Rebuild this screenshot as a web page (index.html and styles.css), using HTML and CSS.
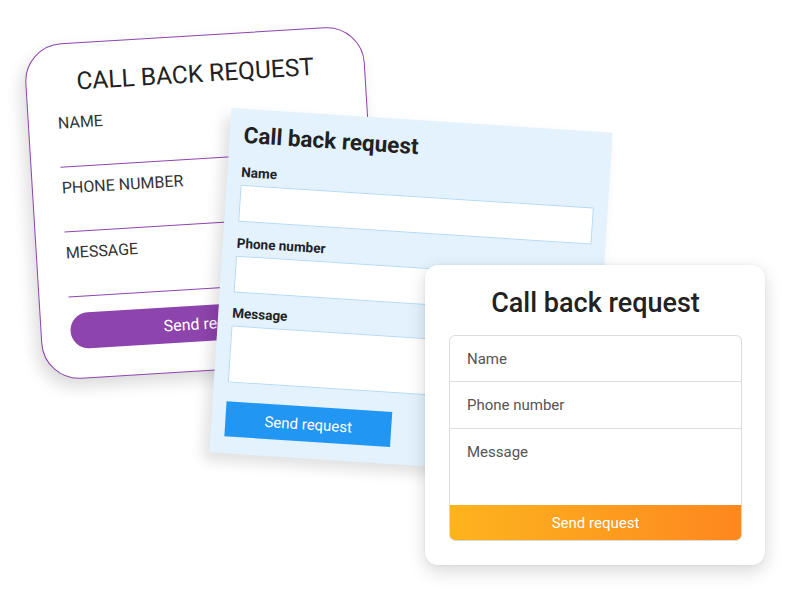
FILE: index.html
```html
<!DOCTYPE html>
<html lang="en">
<head>
<meta charset="utf-8">
<title>Call back request forms</title>
<link rel="stylesheet" href="styles.css">
</head>
<body>
<div class="stage">
  <section class="card card-outline">
    <h2 class="outline-title">CALL BACK REQUEST</h2>
    <div class="outline-field"><span class="outline-label">NAME</span></div>
    <div class="outline-field"><span class="outline-label">PHONE NUMBER</span></div>
    <div class="outline-field"><span class="outline-label">MESSAGE</span></div>
    <div class="outline-button">Send request</div>
  </section>

  <section class="card card-blue">
    <h2 class="blue-title">Call back request</h2>
    <div class="blue-group">
      <span class="blue-label">Name</span>
      <div class="blue-input"></div>
    </div>
    <div class="blue-group">
      <span class="blue-label">Phone number</span>
      <div class="blue-input"></div>
    </div>
    <div class="blue-group">
      <span class="blue-label">Message</span>
      <div class="blue-input blue-textarea"></div>
    </div>
    <div class="blue-button">Send request</div>
  </section>

  <section class="card card-white">
    <h2 class="white-title">Call back request</h2>
    <div class="white-form">
      <div class="white-row">Name</div>
      <div class="white-row">Phone number</div>
      <div class="white-row white-message">Message</div>
      <div class="white-button">Send request</div>
    </div>
  </section>
</div>
</body>
</html>
```

FILE: styles.css
```css
* { box-sizing: border-box; }

html, body {
  margin: 0;
  padding: 0;
  background: #ffffff;
}

body {
  font-family: Roboto, "Liberation Sans", Arial, sans-serif;
  color: #222;
}

.stage {
  position: relative;
  width: 791px;
  height: 590px;
  overflow: hidden;
  background: #ffffff;
}

.card {
  position: absolute;
  display: flex;
  flex-direction: column;
}

/* ---------- Card 1: outlined purple ---------- */
.card-outline {
  left: 33px;
  top: 35px;
  width: 340px;
  height: 336px;
  padding: 24px 29px 25px;
  background: #fff;
  border: 1.5px solid #8e44ad;
  border-radius: 38px;
  transform: rotate(-3.5deg);
  box-shadow: -5px 8px 16px rgba(0, 0, 0, 0.14);
}

.outline-title {
  margin: 0 0 17px;
  font-size: 24.5px;
  line-height: 28px;
  font-weight: 400;
  text-align: center;
  color: #222;
}

.outline-field {
  padding-bottom: 34px;
  margin-bottom: 11px;
  border-bottom: 1.5px solid #8e44ad;
}

.outline-label {
  display: block;
  font-size: 16px;
  line-height: 19px;
  color: #333;
}

.outline-button {
  margin-top: 5px;
  height: 36px;
  border-radius: 18px;
  background: #8e44ad;
  color: #fff;
  font-size: 16px;
  display: flex;
  align-items: center;
  justify-content: center;
}

/* ---------- Card 2: light blue ---------- */
.card-blue {
  left: 220px;
  top: 120px;
  width: 382px;
  height: 345px;
  padding: 13px 14px 14px;
  background: #e3f2fd;
  transform: rotate(3.7deg);
  box-shadow: -6px 8px 14px rgba(0, 0, 0, 0.12);
}

.blue-title {
  margin: 0 0 16px;
  font-size: 22.5px;
  line-height: 26px;
  font-weight: 700;
  color: #212121;
}

.blue-group {
  display: flex;
  flex-direction: column;
  margin-bottom: 12.5px;
}

.blue-label {
  font-size: 13.5px;
  line-height: 16px;
  font-weight: 700;
  color: #222;
  margin-bottom: 5px;
}

.blue-input {
  height: 37px;
  background: #fff;
  border: 1px solid #b5d9f5;
}

.blue-textarea {
  height: 57px;
}

.blue-button {
  margin-top: 6.5px;
  width: 166px;
  height: 35px;
  background: #2196f3;
  color: #fff;
  font-size: 15px;
  display: flex;
  align-items: center;
  justify-content: center;
}

/* ---------- Card 3: white ---------- */
.card-white {
  left: 425px;
  top: 265px;
  width: 340px;
  height: 300px;
  padding: 22px 23px 24px 24px;
  background: #fff;
  border-radius: 13px;
  box-shadow: 0 6px 18px rgba(0, 0, 0, 0.16), 0 0 3px rgba(0, 0, 0, 0.06);
}

.white-title {
  margin: 0 0 16px;
  font-size: 27px;
  line-height: 32px;
  font-weight: 500;
  text-align: center;
  color: #222;
}

.white-form {
  display: flex;
  flex-direction: column;
  border: 1px solid #dcdcdc;
  border-radius: 6px;
  overflow: hidden;
}

.white-row {
  height: 46.5px;
  padding-left: 17px;
  display: flex;
  align-items: center;
  font-size: 15px;
  color: #555;
  border-bottom: 1px solid #dedede;
}

.white-message {
  height: 77px;
  align-items: flex-start;
  padding-top: 14px;
  border-bottom: none;
}

.white-button {
  height: 35px;
  display: flex;
  align-items: center;
  justify-content: center;
  color: #fff;
  font-size: 15px;
  background: linear-gradient(90deg, #fdb41d 0%, #fd9e1f 50%, #fe871e 100%);
}
```
